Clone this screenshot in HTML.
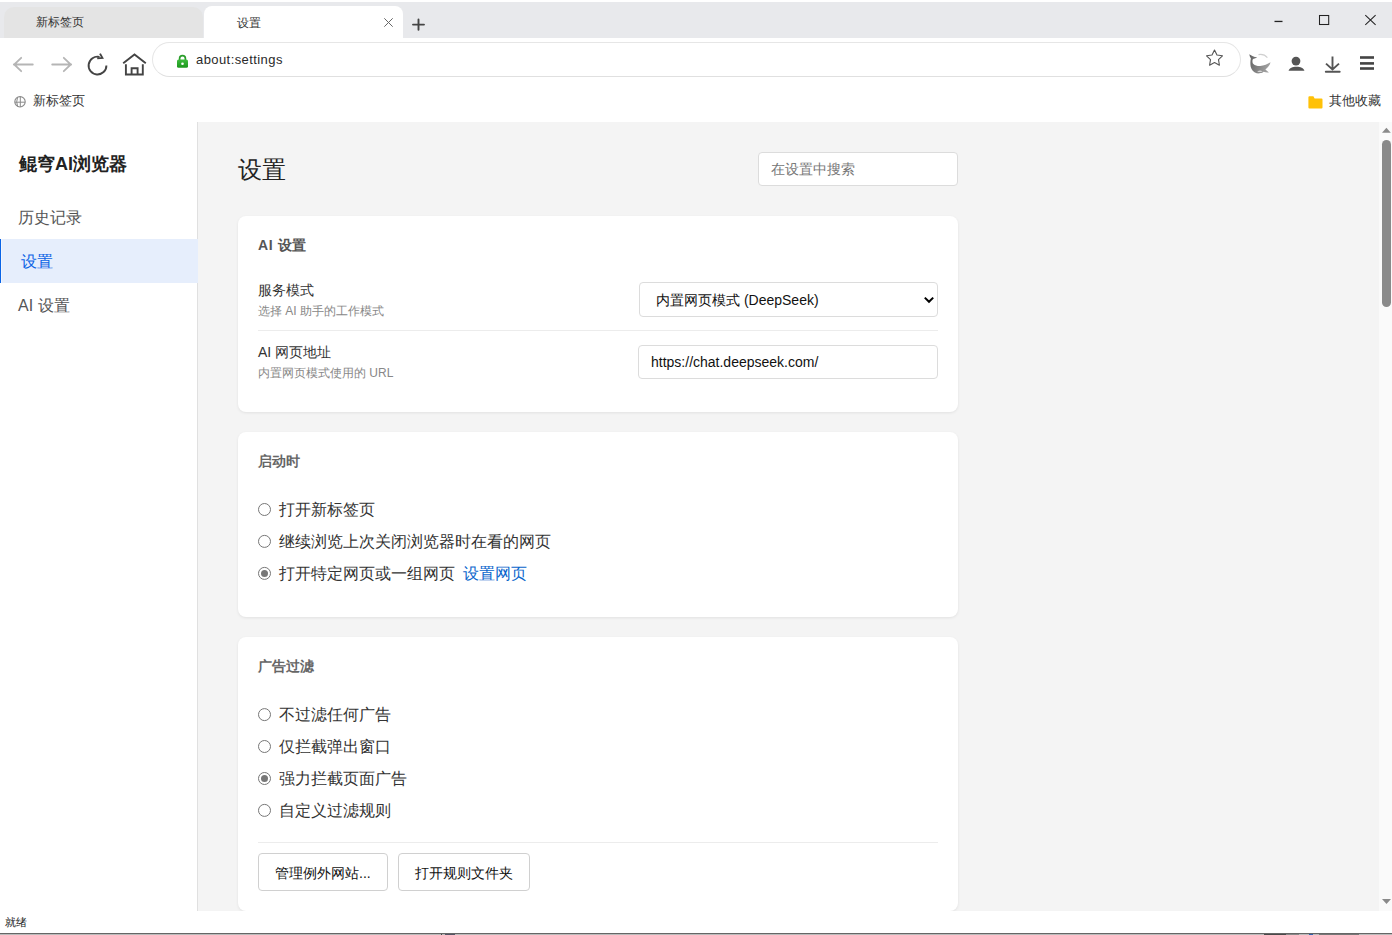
<!DOCTYPE html>
<html><head><meta charset="utf-8">
<style>
*{box-sizing:border-box;margin:0;padding:0}
html,body{width:1392px;height:935px;overflow:hidden;background:#fff;font-family:"Liberation Sans",sans-serif;color:#333}
.a{position:absolute;white-space:nowrap}
#tabbar{position:absolute;left:0;top:2px;width:1392px;height:36px;background:#e8e9ec}
.tab{position:absolute;top:4px;height:32px;border-radius:8px 8px 0 0}
#tab1{left:4px;width:199px;top:5px;height:31px;border-radius:10px 10px 0 0;background:#e4e4e4}
#tab2{left:204px;width:199px;background:#fff}
#toolbar{position:absolute;left:0;top:38px;width:1392px;height:44px;background:#fff}
#addr{position:absolute;left:152px;top:42px;width:89px;height:35px;border:1px solid #e6e6e6;border-bottom-color:#e0e0e0;border-radius:18px;width:1089px;background:#fff}
#content{position:absolute;left:0;top:122px;width:1392px;height:789px;background:#f4f4f4;overflow:hidden}
#sidebar{position:absolute;left:0;top:0;width:198px;height:789px;background:#fff;border-right:1px solid #e0e0e0}
.card{position:absolute;left:238px;width:720px;background:#fff;border-radius:8px;box-shadow:0 1px 3px rgba(0,0,0,.08)}
.sbtrack{position:absolute;left:1379px;top:0;width:13px;height:789px;background:#fafafa}
#status{position:absolute;left:0;top:911px;width:1392px;height:22px;background:#fff}
</style></head><body>
<div id="tabbar">
  <div class="tab" id="tab1"></div>
  <div class="tab" id="tab2"></div>
</div>
<div class="a" style="left:36px;top:13px;font-size:12px;line-height:18px;color:#333">新标签页</div>
<div class="a" style="left:237px;top:14px;font-size:12px;line-height:18px;color:#333">设置</div>
<div id="toolbar"></div>
<div id="addr"></div>
<div class="a" style="left:196px;top:51px;font-size:13px;letter-spacing:0.42px;line-height:18px;color:#2a2a2a">about:settings</div>

<div class="a" style="left:33px;top:92px;font-size:13px;line-height:18px;color:#333">新标签页</div>
<div class="a" style="left:1329px;top:92px;font-size:13px;line-height:18px;color:#333">其他收藏</div>

<div id="content">
  <div id="sidebar"></div>
  <div class="card" style="top:94px;height:196px"></div>
  <div class="card" style="top:310px;height:185px"></div>
  <div class="card" style="top:515px;height:274px"></div>
  <div class="sbtrack"></div>
</div>
<div id="status"></div>
<!-- sidebar text -->
<div class="a" style="left:19px;top:152px;font-size:18px;line-height:24px;font-weight:bold;color:#222">鲲穹AI浏览器</div>
<div class="a" style="left:18px;top:207px;font-size:16px;line-height:22px;color:#555">历史记录</div>
<div class="a" style="left:0;top:239px;width:198px;height:44px;background:#e6eefc;border-left:1px solid #0a64e6"></div>
<div class="a" style="left:1px;top:239px;width:1px;height:44px;background:#f3f6fd"></div>
<div class="a" style="left:21px;top:251px;font-size:16px;line-height:22px;color:#0b63e5">设置</div>
<div class="a" style="left:18px;top:295px;font-size:16px;line-height:22px;color:#555">AI 设置</div>
<!-- heading -->
<div class="a" style="left:238px;top:155px;font-size:24px;line-height:30px;color:#222">设置</div>
<div class="a" style="left:758px;top:152px;width:200px;height:34px;background:#fff;border:1px solid #dcdcdc;border-radius:4px"></div>
<div class="a" style="left:771px;top:159px;font-size:14px;line-height:20px;color:#777">在设置中搜索</div>
<!-- card1 -->
<div class="a" style="left:258px;top:235px;font-size:14px;line-height:20px;font-weight:bold;color:#555"><span style="letter-spacing:0.7px">AI </span>设置</div>
<div class="a" style="left:258px;top:280px;font-size:14px;line-height:20px;color:#333">服务模式</div>
<div class="a" style="left:258px;top:303px;font-size:12px;line-height:17px;color:#888">选择 AI 助手的工作模式</div>
<div class="a" style="left:639px;top:282px;width:299px;height:35px;background:#fff;border:1px solid #dcdcdc;border-radius:4px"></div>
<div class="a" style="left:656px;top:290px;font-size:14px;line-height:20px;color:#111">内置网页模式 (DeepSeek)</div>
<div class="a" style="left:258px;top:330px;width:680px;height:1px;background:#ececec"></div>
<div class="a" style="left:258px;top:342px;font-size:14px;line-height:20px;color:#333">AI 网页地址</div>
<div class="a" style="left:258px;top:365px;font-size:12px;line-height:17px;color:#888">内置网页模式使用的 URL</div>
<div class="a" style="left:638px;top:345px;width:300px;height:34px;background:#fff;border:1px solid #dcdcdc;border-radius:4px"></div>
<div class="a" style="left:651px;top:352px;font-size:14px;line-height:20px;color:#111">https://chat.deepseek.com/</div>
<!-- card2 -->
<div class="a" style="left:258px;top:451px;font-size:14px;line-height:20px;font-weight:bold;color:#666">启动时</div>
<div class="a" style="left:279px;top:499px;font-size:16px;line-height:22px;color:#333">打开新标签页</div>
<div class="a" style="left:279px;top:531px;font-size:16px;line-height:22px;color:#333">继续浏览上次关闭浏览器时在看的网页</div>
<div class="a" style="left:279px;top:563px;font-size:16px;line-height:22px;color:#333">打开特定网页或一组网页 <span style="color:#0a66cc;margin-left:4px">设置网页</span></div>
<!-- card3 -->
<div class="a" style="left:258px;top:656px;font-size:14px;line-height:20px;font-weight:bold;color:#666">广告过滤</div>
<div class="a" style="left:279px;top:704px;font-size:16px;line-height:22px;color:#333">不过滤任何广告</div>
<div class="a" style="left:279px;top:736px;font-size:16px;line-height:22px;color:#333">仅拦截弹出窗口</div>
<div class="a" style="left:279px;top:768px;font-size:16px;line-height:22px;color:#333">强力拦截页面广告</div>
<div class="a" style="left:279px;top:800px;font-size:16px;line-height:22px;color:#333">自定义过滤规则</div>
<div class="a" style="left:258px;top:842px;width:680px;height:1px;background:#ececec"></div>
<div class="a" style="left:258px;top:853px;width:130px;height:38px;background:#fff;border:1px solid #d0d0d0;border-radius:4px"></div>
<div class="a" style="left:275px;top:863px;font-size:14px;line-height:20px;color:#111">管理例外网站...</div>
<div class="a" style="left:398px;top:853px;width:132px;height:38px;background:#fff;border:1px solid #d0d0d0;border-radius:4px"></div>
<div class="a" style="left:415px;top:863px;font-size:14px;line-height:20px;color:#111">打开规则文件夹</div>
<svg class="a" style="left:0;top:0;z-index:5" width="1392" height="935" viewBox="0 0 1392 935">
<path d="M924.8,297.6L929,301.8L933.2,297.6" stroke="#000" stroke-width="2" fill="none"/>
<circle cx="264.5" cy="509.5" r="6" stroke="#777" stroke-width="1" fill="#fff"/>
<circle cx="264.5" cy="541.4" r="6" stroke="#777" stroke-width="1" fill="#fff"/>
<circle cx="264.5" cy="573.4" r="6" stroke="#777" stroke-width="1" fill="#fff"/>
<circle cx="264.5" cy="573.4" r="3.5" fill="#777"/>
<circle cx="264.5" cy="714.6" r="6" stroke="#777" stroke-width="1" fill="#fff"/>
<circle cx="264.5" cy="746.5" r="6" stroke="#777" stroke-width="1" fill="#fff"/>
<circle cx="264.5" cy="778.5" r="6" stroke="#777" stroke-width="1" fill="#fff"/>
<circle cx="264.5" cy="778.5" r="3.5" fill="#777"/>
<circle cx="264.5" cy="810.4" r="6" stroke="#777" stroke-width="1" fill="#fff"/>
<!-- scrollbar -->
<path d="M1382,132.7L1386.4,127.8L1390.8,132.7Z" fill="#8a8a8a"/>
<rect x="1382" y="140" width="9" height="167" rx="4.5" fill="#8a8a8a"/>
<path d="M1382,899L1386.5,904L1391,899Z" fill="#8a8a8a"/>
<!-- bottom edge -->
<rect x="0" y="933" width="1392" height="1" fill="#666"/>
<rect x="0" y="934" width="1392" height="1" fill="#bbb"/>
<rect x="441" y="934" width="1" height="1" fill="#444"/>
<rect x="445" y="934" width="10" height="1" fill="#556"/>
<rect x="1264" y="934" width="22" height="1" fill="#4a4a4a"/>
<rect x="1286" y="934" width="13" height="1" fill="#888"/>
<rect x="1309" y="934" width="4" height="1" fill="#3060b0"/>
<rect x="1319" y="934" width="40" height="1" fill="#777"/>
</svg>

<div class="a" style="left:5px;top:914px;font-size:11px;line-height:16px;color:#222">就绪</div>

<svg class="a" style="left:0;top:0;z-index:10" width="1392" height="935" viewBox="0 0 1392 935">
<!-- tab close -->
<path d="M384.3,18.3L392.7,26.7M392.7,18.3L384.3,26.7" stroke="#666" stroke-width="1" fill="none"/>
<!-- new tab plus -->
<path d="M418.5,19.5V29.8M413,24.6H424" stroke="#444" stroke-width="1.9" stroke-linecap="round" fill="none"/>
<!-- window controls -->
<rect x="1274.5" y="20.8" width="8" height="1.3" fill="#222"/>
<rect x="1319.5" y="15.5" width="9.2" height="9" stroke="#222" stroke-width="1.05" fill="none"/>
<path d="M1365.3,15.2L1375.6,24.8M1375.6,15.2L1365.3,24.8" stroke="#222" stroke-width="1.05" fill="none"/>
<!-- back / forward -->
<path d="M13.8,64.5H32.8M21.2,57.8L14.2,64.5L21.2,71.2" stroke="#b5b5b5" stroke-width="1.8" fill="none" stroke-linecap="round" stroke-linejoin="miter"/>
<path d="M52.2,64.5H71.2M63.8,57.8L70.8,64.5L63.8,71.2" stroke="#b5b5b5" stroke-width="1.8" fill="none" stroke-linecap="round"/>
<!-- reload -->
<path d="M106.4,65.5A8.9,8.9 0 1 1 99.5,56.9" stroke="#444" stroke-width="1.9" fill="none"/>
<path d="M100,53.6L102.4,57.9L97.2,58.3" stroke="#444" stroke-width="1.9" fill="none" stroke-linejoin="miter"/>
<!-- home -->
<path d="M123.2,63.3L134.5,54.4L145.8,63.3" stroke="#444" stroke-width="1.9" fill="none"/>
<path d="M125.9,64.2V74.5H142.8V64.2M131.6,74.5V68.3H137.6V74.5" stroke="#444" stroke-width="1.9" fill="none"/>
<!-- lock -->
<path d="M179.6,60.2V58.6A2.9,2.9 0 0 1 185.4,58.6V60.2" stroke="#2a9d2a" stroke-width="1.7" fill="none"/>
<defs><linearGradient id="lg" x1="0" y1="0" x2="0" y2="1"><stop offset="0" stop-color="#3dbb3d"/><stop offset="1" stop-color="#1c961c"/></linearGradient></defs>
<rect x="177" y="59.6" width="11" height="8.2" rx="1.6" fill="url(#lg)"/>
<circle cx="182.5" cy="63.7" r="1.3" fill="#fff"/>
<!-- star -->
<path d="M1214.50,50.05L1216.97,55.00L1222.44,55.82L1218.49,59.70L1219.41,65.16L1214.50,62.60L1209.59,65.16L1210.51,59.70L1206.56,55.82L1212.03,55.00Z" stroke="#555" stroke-width="1.1" fill="none" stroke-linejoin="round"/>
<!-- whale -->
<defs><linearGradient id="wg" x1="0" y1="0" x2="1" y2="0.3"><stop offset="0" stop-color="#606060"/><stop offset="1" stop-color="#a0a0a0"/></linearGradient></defs>
<path d="M1249.3,54.2C1251.5,55.6 1254,56.9 1257.2,57.3C1255.6,58.3 1253.8,58.6 1252.7,59.4C1252.2,61.2 1252.4,63 1253.4,64C1255,65.6 1257.6,66.1 1260.2,66C1264,65.8 1267.5,64.2 1270.5,62.3C1270,65 1268.2,67.4 1265.4,69.6L1268.9,72.5C1267,72.8 1265.4,72.4 1263.6,71.8C1262.8,72.6 1262,73 1260.8,73.1C1259.3,73.4 1257.8,73.5 1256.6,73.3C1253.6,72.4 1251.3,69.6 1250.7,66.8C1250.2,64 1250.3,60.8 1250.9,58.6C1250.1,57.3 1249.5,55.9 1249.3,54.2Z" fill="url(#wg)"/>
<path d="M1257.2,71.9Q1259.8,69.4 1262.6,71.4Q1260,72.4 1257.2,71.9Z" fill="#d5d5d5"/>
<path d="M1258.5,54.6Q1264,53.6 1267.4,57.6" stroke="#d0d0d0" stroke-width="1.1" fill="none"/>
<!-- person -->
<circle cx="1296" cy="61.1" r="4.4" fill="#555"/>
<path d="M1288.6,70.7C1289.4,67.9 1292.4,66.7 1296.5,66.7C1300.6,66.7 1303.6,67.9 1304.4,70.7Z" fill="#555"/>
<!-- download -->
<path d="M1332.5,56.4V69M1326,63.6L1332.5,69.4L1339,63.6" stroke="#555" stroke-width="1.9" fill="none"/>
<path d="M1325.8,71.8H1339.7" stroke="#555" stroke-width="1.9" stroke-linecap="round"/>
<!-- menu -->
<rect x="1360" y="56.2" width="14" height="2.6" fill="#444"/>
<rect x="1360" y="62.1" width="14" height="2.6" fill="#444"/>
<rect x="1360" y="67.2" width="14" height="2.6" fill="#444"/>
<!-- globe -->
<circle cx="20" cy="101.8" r="5.2" stroke="#8a8a8a" stroke-width="1.1" fill="none"/>
<path d="M20.3,96.6V107M14.8,102.2H25.2M17.6,97.2Q15.8,101.8 17.6,106.5" stroke="#8a8a8a" stroke-width="1" fill="none"/>
<!-- folder -->
<path d="M1308.4,97.3Q1308.4,96.3 1309.4,96.3H1313.4L1314.6,98.6H1321.5Q1322.5,98.6 1322.5,99.6V107.4Q1322.5,108.4 1321.5,108.4H1309.4Q1308.4,108.4 1308.4,107.4Z" fill="#ffc107"/>
</svg>
</body></html>
